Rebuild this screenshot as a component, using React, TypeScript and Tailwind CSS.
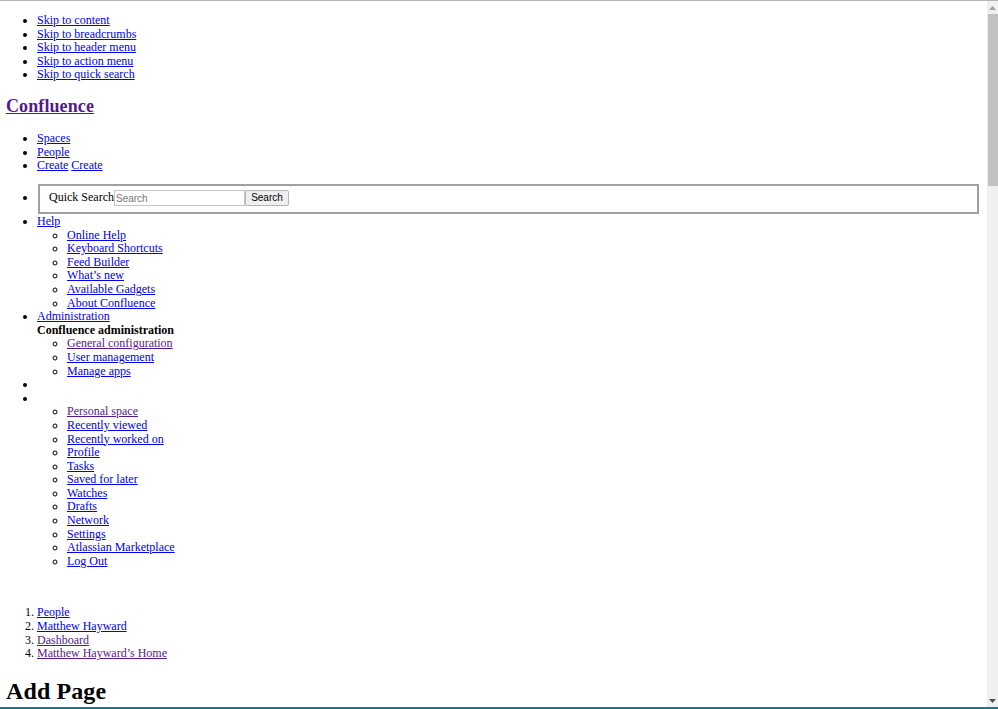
import React from 'react';

const BLUE = 'text-[#0000ee] underline';
const PURPLE = 'text-[#551a8b] underline';

type Item = { label: string; visited?: boolean };

const helpItems: Item[] = [
  { label: 'Online Help' },
  { label: 'Keyboard Shortcuts' },
  { label: 'Feed Builder' },
  { label: "What\u2019s new" },
  { label: 'Available Gadgets' },
  { label: 'About Confluence' },
];

const adminItems: Item[] = [
  { label: 'General configuration', visited: true },
  { label: 'User management' },
  { label: 'Manage apps' },
];

const userItems: Item[] = [
  { label: 'Personal space', visited: true },
  { label: 'Recently viewed' },
  { label: 'Recently worked on' },
  { label: 'Profile' },
  { label: 'Tasks' },
  { label: 'Saved for later' },
  { label: 'Watches' },
  { label: 'Drafts' },
  { label: 'Network' },
  { label: 'Settings' },
  { label: 'Atlassian Marketplace' },
  { label: 'Log Out' },
];

const skipLinks = ['Skip to content', 'Skip to breadcrumbs', 'Skip to header menu', 'Skip to action menu', 'Skip to quick search'];

const crumbs: Item[] = [
  { label: 'People' },
  { label: 'Matthew Hayward' },
  { label: 'Dashboard', visited: true },
  { label: "Matthew Hayward\u2019s Home", visited: true },
];

const Link: React.FC<{ item: Item }> = ({ item }) => (
  <a href="#" className={item.visited ? PURPLE : BLUE}>
    {item.label}
  </a>
);

const SubList: React.FC<{ items: Item[] }> = ({ items }) => (
  <ul className="list-[circle] pl-[30px]">
    {items.map((item) => (
      <li key={item.label}>
        <Link item={item} />
      </li>
    ))}
  </ul>
);

export default function App() {
  return (
    <div className="h-[709px] overflow-hidden flex flex-col bg-white text-black text-[12px] leading-[13.6px] font-['Liberation_Serif','Times_New_Roman',serif]">
      <div className="h-px bg-[#b4b4b4] shrink-0" />
      <div className="flex-1 min-h-0 flex">
        <main className="flex-1 min-w-0 overflow-hidden px-[6px]">
          <ul className="list-disc pl-[31px] mt-[13px]">
            {skipLinks.map((label) => (
              <li key={label}>
                <a href="#" className={BLUE}>{label}</a>
              </li>
            ))}
          </ul>

          <h2 className="text-[18px] leading-[20.25px] font-bold tracking-[0.1px] mt-[14px]">
            <a href="#" className={PURPLE}>Confluence</a>
          </h2>

          <ul className="list-disc pl-[31px] mt-4">
            <li><a href="#" className={BLUE}>Spaces</a></li>
            <li><a href="#" className={BLUE}>People</a></li>
            <li>
              <a href="#" className={BLUE}>Create</a> <a href="#" className={BLUE}>Create</a>
            </li>
          </ul>

          <ul className="list-disc pl-[31px] mt-[11px]">
            <li className="pb-px">
              <form className="flex items-center h-[30px] ml-px mr-[2px] border-2 border-[#a0a0a0] pl-[9px] pb-[2px]">
                <span>Quick Search</span>
                <input
                  placeholder="Search"
                  className="w-[131px] h-4 px-px border border-[#c4c4c4] bg-white text-[10px] font-['Liberation_Sans',Arial,sans-serif] placeholder:text-[#757575] outline-none"
                />
                <button
                  type="button"
                  className="w-11 h-4 border border-[#b4b4b4] rounded-[2px] bg-[#efefef] text-[10px] leading-none font-['Liberation_Sans',Arial,sans-serif] text-black"
                >
                  Search
                </button>
              </form>
            </li>
            <li>
              <a href="#" className={BLUE}>Help</a>
              <SubList items={helpItems} />
            </li>
            <li>
              <a href="#" className={BLUE}>Administration</a>
              <div className="font-bold">Confluence administration</div>
              <SubList items={adminItems} />
            </li>
            <li>{'\u00a0'}</li>
            <li>
              {'\u00a0'}
              <SubList items={userItems} />
            </li>
          </ul>

          <ol className="list-decimal pl-[31px] mt-[38px]">
            {crumbs.map((item) => (
              <li key={item.label}>
                <Link item={item} />
              </li>
            ))}
          </ol>

          <h1 className="text-[24px] leading-[27px] font-bold tracking-[0.1px] mt-[17px]">Add Page</h1>
        </main>

        {/* browser scrollbar */}
        <aside className="w-[11px] shrink-0 flex flex-col bg-[#f0f0f0]">
          <div className="h-[13px] flex items-center justify-center">
            <svg width="7" height="4" viewBox="0 0 7 4"><path d="M3.5 0 7 4H0z" fill="#a3a3a3" /></svg>
          </div>
          <div className="h-[172px] ml-px bg-[#c1c1c1]" />
          <div className="flex-1" />
          <div className="h-[13px] flex items-center justify-center">
            <svg width="7" height="4" viewBox="0 0 7 4"><path d="M0 0h7L3.500 4z" fill="#505050" /></svg>
          </div>
        </aside>
      </div>
      <div className="h-[2px] bg-[#0f7f8c] shrink-0" />
    </div>
  );
}
